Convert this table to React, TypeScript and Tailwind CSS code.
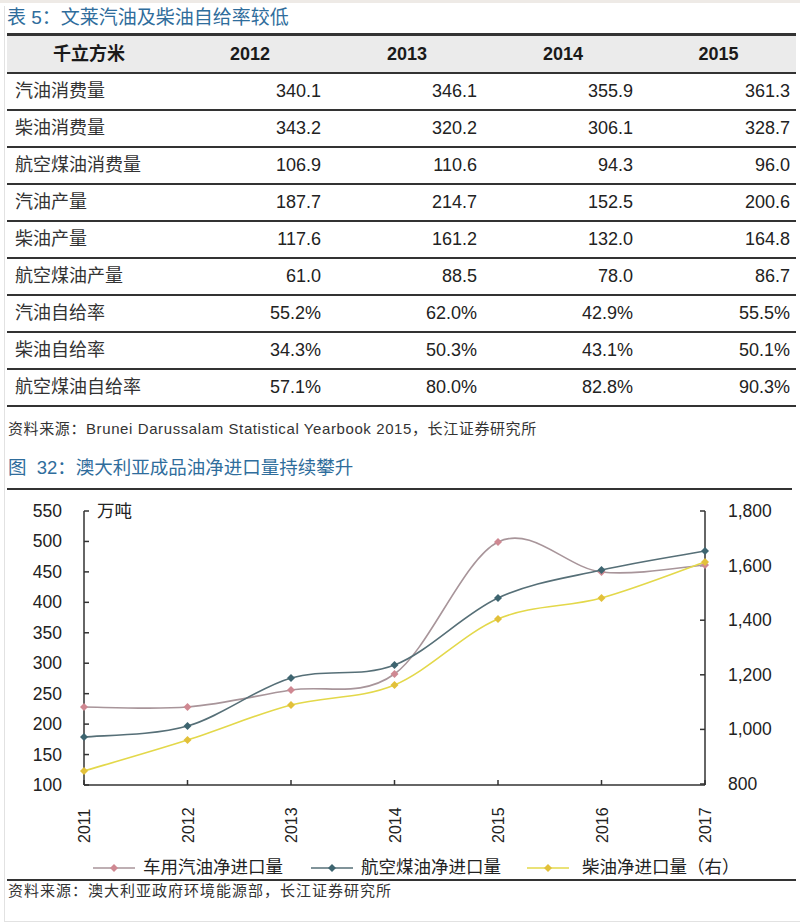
import React from "react";

const rows: [string, string, string, string, string][] = [
  ["汽油消费量", "340.1", "346.1", "355.9", "361.3"],
  ["柴油消费量", "343.2", "320.2", "306.1", "328.7"],
  ["航空煤油消费量", "106.9", "110.6", "94.3", "96.0"],
  ["汽油产量", "187.7", "214.7", "152.5", "200.6"],
  ["柴油产量", "117.6", "161.2", "132.0", "164.8"],
  ["航空煤油产量", "61.0", "88.5", "78.0", "86.7"],
  ["汽油自给率", "55.2%", "62.0%", "42.9%", "55.5%"],
  ["柴油自给率", "34.3%", "50.3%", "43.1%", "50.1%"],
  ["航空煤油自给率", "57.1%", "80.0%", "82.8%", "90.3%"],
];

// page coordinates, chart svg uses the same x/y as the screenshot
const xs = [84, 187.5, 291, 394.5, 498, 601.5, 705];
const years = ["2011", "2012", "2013", "2014", "2015", "2016", "2017"];
const series = [
  { name: "gasoline", ys: [707, 707, 690, 674, 542, 572, 565], line: "#a8959a", dot: "#cf8892" },
  { name: "jet", ys: [737, 726, 678, 665, 598, 570, 551], line: "#566f77", dot: "#3e6570" },
  { name: "diesel", ys: [771, 740, 705, 685, 619, 598, 562], line: "#e3d84a", dot: "#e2c03a" },
];

const leftTicks = [550, 500, 450, 400, 350, 300, 250, 200, 150, 100];
const rightTicks = ["1,800", "1,600", "1,400", "1,200", "1,000", "800"];

function smoothPath(ys: number[]) {
  const pts = xs.map((x, i) => [x, ys[i]]);
  let d = `M${pts[0][0]},${pts[0][1]}`;
  for (let i = 0; i < pts.length - 1; i++) {
    const p0 = pts[i - 1] ?? pts[i];
    const p1 = pts[i];
    const p2 = pts[i + 1];
    const p3 = pts[i + 2] ?? p2;
    const c1x = p1[0] + (p2[0] - p0[0]) / 6;
    const c1y = p1[1] + (p2[1] - p0[1]) / 6;
    const c2x = p2[0] - (p3[0] - p1[0]) / 6;
    const c2y = p2[1] - (p3[1] - p1[1]) / 6;
    d += ` C${c1x},${c1y} ${c2x},${c2y} ${p2[0]},${p2[1]}`;
  }
  return d;
}

function Diamond({ x, y, fill }: { x: number; y: number; fill: string }) {
  return <path d={`M${x},${y - 4} L${x + 4},${y} L${x},${y + 4} L${x - 4},${y} Z`} fill={fill} />;
}

function LegendMark({ line, dot }: { line: string; dot: string }) {
  return (
    <svg width="42" height="10" viewBox="0 0 42 10">
      <line x1="0" y1="5" x2="42" y2="5" stroke={line} strokeWidth="1.5" />
      <path d="M21,1 L25,5 L21,9 L17,5 Z" fill={dot} />
    </svg>
  );
}

function Chart() {
  const leftY = (i: number) => 511 + i * (274 / 9);
  const rightY = (i: number) => 511 + i * (273 / 5);
  return (
    <svg width="789" height="366" viewBox="7 490 789 366" className="block">
      {/* left axis */}
      <line x1="84" y1="511" x2="84" y2="785" stroke="#333" strokeWidth="1.5" />
      {leftTicks.map((v, i) => (
        <g key={v}>
          <line x1="84" y1={leftY(i)} x2="89" y2={leftY(i)} stroke="#333" strokeWidth="1.5" />
          <text x="62" y={leftY(i) + 6} textAnchor="end" fontSize="17.5" fill="#222">
            {v}
          </text>
        </g>
      ))}
      <text x="97" y="517" fontSize="17.5" fill="#222">
        万吨
      </text>
      {/* right axis */}
      <line x1="705" y1="511" x2="705" y2="785" stroke="#333" strokeWidth="1.5" />
      {rightTicks.map((v, i) => (
        <g key={v}>
          <line x1="700" y1={rightY(i)} x2="705" y2={rightY(i)} stroke="#333" strokeWidth="1.5" />
          <text x="728" y={rightY(i) + 6} fontSize="17.5" fill="#222">
            {v}
          </text>
        </g>
      ))}
      {/* x axis */}
      <line x1="84" y1="785" x2="705" y2="785" stroke="#333" strokeWidth="1.5" />
      {xs.map((x, i) => (
        <g key={years[i]}>
          <line x1={x} y1="780" x2={x} y2="785" stroke="#333" strokeWidth="1.5" />
          <text
            transform={`translate(${x + 6},843) rotate(-90)`}
            fontSize="16"
            fill="#222"
          >
            {years[i]}
          </text>
        </g>
      ))}
      {series.map((s) => (
        <g key={s.name}>
          <path d={smoothPath(s.ys)} fill="none" stroke={s.line} strokeWidth="1.6" />
          {s.ys.map((y, i) => (
            <Diamond key={i} x={xs[i]} y={y} fill={s.dot} />
          ))}
        </g>
      ))}
    </svg>
  );
}

export default function App() {
  return (
    <div className="relative w-[800px] h-[923px] bg-white overflow-hidden text-[#222] font-['Liberation_Sans','Noto_Sans_CJK_SC',sans-serif]">
      <div className="h-[3px] bg-[#eeeae6]" />
      <div className="ml-[4px] h-[916px] border-l border-b border-[#e2e2e2] pl-[2px] pr-[4px]">
        <div className="mt-[3px] h-[23px] leading-[23px] text-[19px] text-[#2f6d9c] whitespace-pre">
          表 5：文莱汽油及柴油自给率较低
        </div>

        <div className="mt-[4px] border-t-[3px] border-[#333]">
          <div className="grid grid-cols-[164px_158px_156px_156px_155px] h-[38px] bg-[#ebebeb] border-b-2 border-[#333] items-center font-bold text-[18px] text-[#1a1a1a]">
            <div className="text-center">千立方米</div>
            <div className="text-center">2012</div>
            <div className="text-center">2013</div>
            <div className="text-center">2014</div>
            <div className="text-center">2015</div>
          </div>
          {rows.map((r) => (
            <div
              key={r[0]}
              className="grid grid-cols-[164px_158px_156px_156px_155px] h-[37px] border-b-2 border-[#333] items-center text-[18px]"
            >
              <div className="pl-[8px] text-[#333]">{r[0]}</div>
              <div className="text-right pr-[8px]">{r[1]}</div>
              <div className="text-right pr-[8px]">{r[2]}</div>
              <div className="text-right pr-[8px]">{r[3]}</div>
              <div className="text-right pr-[6px]">{r[4]}</div>
            </div>
          ))}
        </div>

        <div className="mt-[12px] pl-[1px] leading-[20px] text-[15px] tracking-[0.6px] text-[#333]">
          资料来源：Brunei Darussalam Statistical Yearbook 2015，长江证券研究所
        </div>

        <div className="mt-[18px] pl-[1px] h-[22px] leading-[22px] text-[18.5px] text-[#2f6d9c] whitespace-pre">
          图  32：澳大利亚成品油净进口量持续攀升
        </div>

        <div className="mt-[9px] h-[2px] bg-[#333] mr-[4px]" />

        <Chart />

        <div className="h-[25px] flex items-center text-[17.5px] text-[#222] border-b-2 border-[#333]">
          <div className="ml-[86px] flex items-center gap-[8px]">
            <LegendMark line="#a8959a" dot="#cf8892" />
            <span>车用汽油净进口量</span>
          </div>
          <div className="ml-[28px] flex items-center gap-[8px]">
            <LegendMark line="#566f77" dot="#3e6570" />
            <span>航空煤油净进口量</span>
          </div>
          <div className="ml-[26px] flex items-center gap-[13px]">
            <LegendMark line="#e3d84a" dot="#e2c03a" />
            <span>柴油净进口量（右）</span>
          </div>
        </div>

        <div className="pl-[1px] leading-[20px] text-[15px] tracking-[1px] text-[#333]">
          资料来源：澳大利亚政府环境能源部，长江证券研究所
        </div>
      </div>
    </div>
  );
}
